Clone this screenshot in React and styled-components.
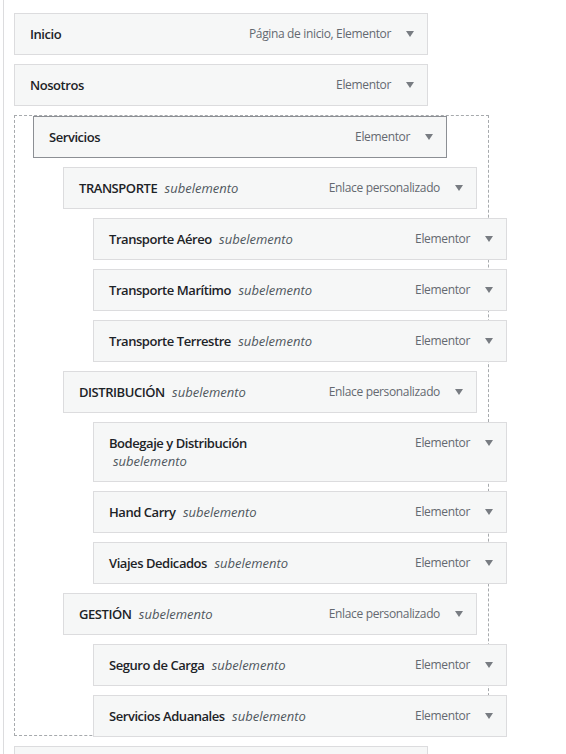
import React from 'react'
import styled, { createGlobalStyle } from 'styled-components'

const GlobalStyle = createGlobalStyle`
  html, body {
    margin: 0;
    padding: 0;
    background: #fff;
  }

  body {
    font-family: "Open Sans", "Noto Sans", sans-serif;
    color: #1d2327;
  }
`

const Page = styled.div`
  height: 100vh;
  margin-left: 3px;
  border-left: 1px solid #dcdcde;
  padding: 13px 0 0 10px;
  box-sizing: border-box;
  overflow: hidden;
`

const MenuList = styled.ul`
  display: flex;
  flex-direction: column;
  gap: 9px;
  margin: 0;
  padding: 0;
  list-style: none;
`

// the dashed box is the sortable placeholder sitting behind the dragged branch
const DragGroup = styled.li`
  position: relative;
  display: flex;
  flex-direction: column;
  gap: 9px;
  padding-top: 1px;

  &::before {
    content: '';
    position: absolute;
    top: 0;
    left: 0;
    bottom: 1px;
    width: 475px;
    box-sizing: border-box;
    border: 1px dashed #a7aaad;
  }
`

const Handle = styled.div`
  position: relative;
  display: flex;
  align-items: flex-start;
  width: 414px;
  box-sizing: border-box;
  margin-left: ${props => props.$indent}px;
  padding: 11px 13px 11px 15px;
  background: #f6f7f7;
  border: 1px solid ${props => (props.$dragging ? '#8c8f94' : '#dcdcde')};
`

const Title = styled.span`
  flex: 1;
  max-width: 214px;
  min-height: 18px;
  font-size: 13px;
  line-height: 18px;
  color: #1d2327;
`

const Name = styled.span`
  font-weight: 600;
  letter-spacing: -0.45px;
`

const SubLabel = styled.span`
  margin-left: 4px;
  font-style: italic;
  font-weight: 400;
  color: #50575e;
`

const Controls = styled.span`
  display: flex;
  align-items: center;
  margin-left: auto;
  height: 18px;
`

const ItemType = styled.span`
  font-size: 12px;
  letter-spacing: -0.35px;
  line-height: 18px;
  color: #646970;
  white-space: nowrap;
  margin-right: 15px;
`

const Arrow = styled.svg`
  display: block;
  width: 8px;
  height: 6px;
  fill: #787c82;
`

const MenuItem = ({ title, type, sub, indent = 0, dragging }) => (
  <Handle $indent={indent} $dragging={dragging}>
    <Title>
      <Name>{title}</Name>
      {sub && <> <SubLabel>subelemento</SubLabel></>}
    </Title>
    <Controls>
      {type && <ItemType>{type}</ItemType>}
      <Arrow viewBox="0 0 8 6">
        <polygon points="0,0 8,0 4,6" />
      </Arrow>
    </Controls>
  </Handle>
)

const branch = [
  {
    title: 'TRANSPORTE',
    children: ['Transporte Aéreo', 'Transporte Marítimo', 'Transporte Terrestre'],
  },
  {
    title: 'DISTRIBUCIÓN',
    children: ['Bodegaje y Distribución', 'Hand Carry', 'Viajes Dedicados'],
  },
  {
    title: 'GESTIÓN',
    children: ['Seguro de Carga', 'Servicios Aduanales'],
  },
]

export default function App() {
  return (
    <>
      <GlobalStyle />
      <Page>
        <MenuList>
          <li><MenuItem title="Inicio" type="Página de inicio, Elementor" /></li>
          <li><MenuItem title="Nosotros" type="Elementor" /></li>
          <DragGroup>
            <MenuItem title="Servicios" type="Elementor" indent={19} dragging />
            {branch.map(({ title, children }) => (
              <React.Fragment key={title}>
                <MenuItem title={title} type="Enlace personalizado" indent={49} sub />
                {children.map(child => (
                  <MenuItem key={child} title={child} type="Elementor" indent={79} sub />
                ))}
              </React.Fragment>
            ))}
          </DragGroup>
          {/* next top-level item, only its top edge is in view */}
          <li><MenuItem title="" /></li>
        </MenuList>
      </Page>
    </>
  )
}
